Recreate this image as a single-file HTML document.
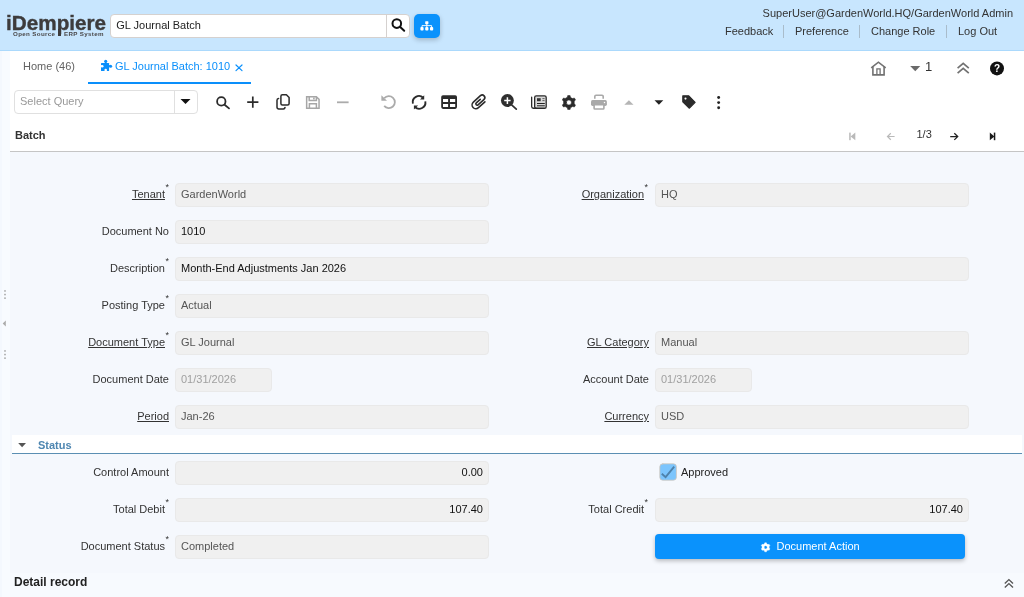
<!DOCTYPE html>
<html lang="en">
<head>
<meta charset="utf-8">
<title>iDempiere - GL Journal Batch</title>
<style>
*{box-sizing:border-box;margin:0;padding:0}
html,body{width:1024px;height:597px;overflow:hidden;background:#fff}
body{position:relative;will-change:transform;font-family:"Liberation Sans",Arial,Helvetica,sans-serif;font-size:11px;color:#333;line-height:1}
.abs{position:absolute}
svg{display:block;overflow:visible}

/* ---------- header ---------- */
#hdr{position:absolute;left:0;top:0;width:1024px;height:51px;background:#c8e6fe;border-bottom:1px solid #abd9fc}
#logo{position:absolute;left:6px;top:11.4px;font-weight:bold;font-size:19.5px;line-height:24px;color:#3d3b3c;-webkit-text-stroke:.35px #3d3b3c;white-space:nowrap;transform:scaleX(1.062);transform-origin:0 0}
.logosub{position:absolute;top:30px;font-weight:bold;font-size:6.2px;line-height:7px;color:#4a4849;letter-spacing:.35px;white-space:nowrap}
#logobar{position:absolute;left:58px;top:29px;width:3px;height:7px;background:#3d3b3c}
#gsearch{position:absolute;left:110px;top:14px;width:300px;height:24px;background:#fff;border:1px solid #d5d1cf;border-radius:4px}
#gsearch .txt{position:absolute;left:5.3px;top:0;line-height:20px;font-size:11px;color:#222}
#gsearch .sep{position:absolute;left:275px;top:0;width:1px;height:22px;background:#d5d1cf}
#treebtn{position:absolute;left:414px;top:14px;width:26px;height:24px;background:#0a92fc;border-radius:5px;box-shadow:0 2px 5px rgba(0,0,0,.22)}
#user{position:absolute;right:11px;top:6px;font-size:11px;line-height:15px;color:#333;white-space:nowrap}
.hl{position:absolute;top:24px;font-size:11px;line-height:15px;color:#333;white-space:nowrap}
.hsep{position:absolute;top:25px;width:1px;height:13px;background:#a9bccb}

/* ---------- left strip ---------- */
#lstrip{position:absolute;left:0;top:51px;width:10px;height:546px;background:#f8fbff;border-left:2px solid #f4f8fe}

/* ---------- tabs ---------- */
.tab{position:absolute;top:59px;font-size:11px;line-height:15px;white-space:nowrap}
#tabline{position:absolute;left:88px;top:82px;width:163px;height:2px;background:#0a8ffb}

/* ---------- toolbar ---------- */
#query{position:absolute;left:14px;top:90px;width:184px;height:24px;border:1px solid #e0e0e0;border-radius:4px;background:#fff}
#query .ph{position:absolute;left:5px;top:0;line-height:20px;font-size:11px;color:#999}
#query .sep{position:absolute;left:159px;top:0;width:1px;height:22px;background:#e0e0e0}
.ic{position:absolute}

/* ---------- form ---------- */
#batch{position:absolute;left:15px;top:128px;font-weight:bold;font-size:11px;line-height:15px;color:#333}
#hline{position:absolute;left:10px;top:151px;width:1014px;height:1px;background:#c5c5c5}
#form{position:absolute;left:10px;top:152px;width:1014px;height:421px;background:#f5f8fd}
.lbl{position:absolute;font-size:11px;line-height:15px;color:#333;white-space:nowrap;text-align:right}
.lbl u{text-decoration:underline;text-underline-offset:1px}
.lbl sup{position:absolute;right:-4px;top:-4px;font-size:9px;line-height:9px}
.fld{position:absolute;margin-top:1px;height:24px;border:1px solid #e9e9e9;border-radius:4px;background:#f0f0f0;font-size:11px;line-height:20px;padding:0 5px;color:#555;white-space:nowrap;overflow:hidden}
.fld.ed{color:#111}
.fld.dis{color:#a0a0a0}
.fld.num{text-align:right;color:#111}
#grp{position:absolute;left:12px;top:435px;width:1010px;height:19px;background:#fff;border-bottom:1px solid #5b8fb3}
#grp span{position:absolute;left:26px;top:3px;font-weight:bold;font-size:11px;line-height:15px;color:#4e86b1}
#docbtn{position:absolute;left:655px;top:534px;width:310px;height:25px;background:#0a92fc;border-radius:4px;box-shadow:0 2px 4px rgba(0,0,0,.25);color:#fff;font-size:11px;line-height:25px;text-align:left;padding-left:121.5px;white-space:nowrap}
#detail{position:absolute;left:10px;top:573px;width:1014px;height:24px;background:#f7fafe}
#detail b{position:absolute;left:4px;top:1.5px;font-size:12px;line-height:15px;color:#222}
</style>
</head>
<body>

<!-- header -->
<div id="hdr">
  <div id="logo">iDempiere</div>
  <div class="logosub" style="left:13px">Open Source</div><div class="logosub" style="left:64px">ERP System</div>
  <div id="logobar"></div>
  <div id="gsearch"><span class="txt">GL Journal Batch</span><span class="sep"></span></div>
  <div id="treebtn"></div>
  <div id="user">SuperUser@GardenWorld.HQ/GardenWorld Admin</div>
  <span class="hl" style="left:725px">Feedback</span>
  <span class="hsep" style="left:783px"></span>
  <span class="hl" style="left:795px">Preference</span>
  <span class="hsep" style="left:859px"></span>
  <span class="hl" style="left:871px">Change Role</span>
  <span class="hsep" style="left:946px"></span>
  <span class="hl" style="left:958px">Log Out</span>
</div>

<div id="lstrip"></div>

<!-- tabs -->
<span class="tab" style="left:23px;color:#626262">Home (46)</span>
<span class="tab" style="left:115px;color:#0a8ffb">GL Journal Batch: 1010</span>
<div id="tabline"></div>

<!-- toolbar -->
<div id="query"><span class="ph">Select Query</span><span class="sep"></span></div>

<!-- form -->
<div id="batch">Batch</div>
<div id="hline"></div>
<div id="form"></div>

<span class="lbl" style="right:859px;top:187px"><u>Tenant</u><sup>*</sup></span>
<div class="fld" style="left:175px;top:182px;width:314px">GardenWorld</div>
<span class="lbl" style="right:380px;top:187px"><u>Organization</u><sup>*</sup></span>
<div class="fld" style="left:655px;top:182px;width:314px">HQ</div>

<span class="lbl" style="right:855px;top:224px">Document No</span>
<div class="fld ed" style="left:175px;top:219px;width:314px">1010</div>

<span class="lbl" style="right:859px;top:261px">Description<sup>*</sup></span>
<div class="fld ed" style="left:175px;top:256px;width:794px">Month-End Adjustments Jan 2026</div>

<span class="lbl" style="right:859px;top:298px">Posting Type<sup>*</sup></span>
<div class="fld" style="left:175px;top:293px;width:314px">Actual</div>

<span class="lbl" style="right:859px;top:335px"><u>Document Type</u><sup>*</sup></span>
<div class="fld" style="left:175px;top:330px;width:314px">GL Journal</div>
<span class="lbl" style="right:375px;top:335px"><u>GL Category</u></span>
<div class="fld" style="left:655px;top:330px;width:314px">Manual</div>

<span class="lbl" style="right:855px;top:372px">Document Date</span>
<div class="fld dis" style="left:175px;top:367px;width:97px">01/31/2026</div>
<span class="lbl" style="right:375px;top:372px">Account Date</span>
<div class="fld dis" style="left:655px;top:367px;width:97px">01/31/2026</div>

<span class="lbl" style="right:855px;top:409px"><u>Period</u></span>
<div class="fld" style="left:175px;top:404px;width:314px">Jan-26</div>
<span class="lbl" style="right:375px;top:409px"><u>Currency</u></span>
<div class="fld" style="left:655px;top:404px;width:314px">USD</div>

<div id="grp"><span>Status</span></div>

<span class="lbl" style="right:855px;top:465px">Control Amount</span>
<div class="fld num" style="left:175px;top:460px;width:314px">0.00</div>
<span class="lbl" style="left:681px;top:465px;color:#222">Approved</span>

<span class="lbl" style="right:859px;top:502px">Total Debit<sup>*</sup></span>
<div class="fld num" style="left:175px;top:497px;width:314px">107.40</div>
<span class="lbl" style="right:380px;top:502px">Total Credit<sup>*</sup></span>
<div class="fld num" style="left:655px;top:497px;width:314px">107.40</div>

<span class="lbl" style="right:859px;top:539px">Document Status<sup>*</sup></span>
<div class="fld" style="left:175px;top:534px;width:314px">Completed</div>
<div id="docbtn">Document Action</div>

<div id="detail"><b>Detail record</b></div>

<!-- icon overlay -->
<svg id="icons" class="abs" style="left:0;top:0" width="1024" height="597" viewBox="0 0 1024 597" fill="none" stroke-linecap="round" stroke-linejoin="round">
  <!-- header search -->
  <g stroke="#111" stroke-width="2">
    <circle cx="396.8" cy="23.6" r="4.3"/>
    <path d="M400.2,27 L404.2,30.8"/>
  </g>
  <!-- sitemap -->
  <g fill="#fff" stroke="none">
    <rect x="425.2" y="21.2" width="3.2" height="3" rx=".6"/>
    <rect x="420.4" y="27" width="3.2" height="3.4" rx=".9"/>
    <rect x="425.2" y="27" width="3.2" height="3.4" rx=".9"/>
    <rect x="430" y="27" width="3.2" height="3.4" rx=".9"/>
  </g>
  <path d="M426.8,24 V27 M422,27 V25.6 H431.6 V27" stroke="#fff" stroke-width=".9" stroke-linecap="butt"/>

  <!-- puzzle piece (tab) -->
  <g stroke="none">
    <rect x="101" y="62.9" width="8.1" height="8" rx=".5" fill="#0a8ffb"/>
    <circle cx="105.7" cy="61.3" r="1.55" fill="#0a8ffb"/><rect x="104.9" y="61.3" width="1.6" height="2" fill="#0a8ffb"/>
    <circle cx="110.6" cy="66.2" r="1.55" fill="#0a8ffb"/><rect x="108.8" y="65.3" width="2" height="1.8" fill="#0a8ffb"/>
    <circle cx="102.2" cy="66.2" r="1.3" fill="#fff"/><rect x="100.5" y="65.3" width="1.7" height="1.8" fill="#fff"/>
    <circle cx="105.7" cy="69.9" r="1.25" fill="#fff"/><rect x="104.9" y="69.9" width="1.6" height="1.5" fill="#fff"/>
  </g>
  <!-- tab close -->
  <path d="M236,65 L242,70.6 M242,65 L236,70.6" stroke="#0a8ffb" stroke-width="1.2"/>

  <!-- home -->
  <g stroke="#727272" stroke-width="1.6" stroke-linecap="butt" stroke-linejoin="miter">
    <path d="M871.2,67.8 L878.4,62.2 L885.7,67.8"/>
    <path d="M872.9,66.8 V74.9 H884.1 V66.8"/>
    <path d="M876.9,74.9 V68.9 H880.1 V74.9" stroke-width="1.3"/>
  </g>
  <path d="M910.2,66.1 H920.3 L915.25,71.3Z" fill="#6a6a6a" stroke="none"/>
  <!-- double chevron up -->
  <path d="M957.6,68.2 L963.2,63.3 L968.8,68.2 M957.6,73.2 L963.2,68.3 L968.8,73.2" stroke="#727272" stroke-width="1.7" stroke-linecap="butt" stroke-linejoin="miter"/>
  <!-- help -->
  <circle cx="997" cy="68.4" r="7" fill="#111" stroke="none"/>

  <!-- query caret -->
  <path d="M180.5,99 H190.5 L185.5,104Z" fill="#111" stroke="none"/>

  <!-- toolbar: search -->
  <g stroke="#2b2b2b" stroke-width="1.8">
    <circle cx="221.3" cy="101.4" r="4.2"/>
    <path d="M224.6,104.7 L229,108.4"/>
  </g>
  <!-- plus -->
  <path d="M247.2,102.2 H258.4 M252.8,96.6 V107.8" stroke="#2b2b2b" stroke-width="1.7" stroke-linecap="butt"/>
  <!-- copy -->
  <g stroke="#2b2b2b" stroke-width="1.5">
    <path d="M282.4,94.8 H286.4 L289.1,97.6 V103.5 A1.5,1.5 0 0 1 287.6,105 H282.4 A1.5,1.5 0 0 1 280.9,103.500 V96.3 A1.5,1.5 0 0 1 282.4,94.8Z"/>
    <path d="M278.6,98.6 A1.7,1.7 0 0 0 277,100.3 V107.2 A1.7,1.7 0 0 0 278.7,108.9 H283.4 A1.7,1.7 0 0 0 285,107.5"/>
  </g>
  <!-- save (disabled) -->
  <g stroke="#a6a6a6" stroke-width="1.5" stroke-linecap="butt" stroke-linejoin="miter">
    <path d="M306.65,96.65 H316.3 L319.05,99.4 V108.3 H306.65Z"/>
    <path d="M309.2,96.65 V100.4 H316.4 V96.65"/>
    <path d="M309.4,108.3 V103.7 H316.4 V108.3"/>
    <path d="M313.9,97.4 V99.4" stroke-width="1.6"/>
  </g>
  <!-- delete (disabled) -->
  <path d="M337,102.3 H348.6" stroke="#ababab" stroke-width="1.8" stroke-linecap="butt"/>

  <!-- undo (disabled) -->
  <path d="M384.3,98.2 A6,6 0 1 1 384.2,105.9" stroke="#ababab" stroke-width="1.8" stroke-linecap="butt"/>
  <path d="M381.4,95.2 V100.8 H387Z" fill="#ababab" stroke="none"/>
  <!-- refresh -->
  <g stroke="#2b2b2b" stroke-width="1.9" stroke-linecap="butt">
    <path d="M412.9,103.6 A6.2,6.2 0 0 1 423.2,97.7"/>
    <path d="M425.3,101.4 A6.2,6.2 0 0 1 414.9,107"/>
  </g>
  <path d="M424.2,95.2 V99.4 H420Z M413.9,109.6 V105.4 H418.1Z" fill="#2b2b2b" stroke="none"/>
  <!-- table -->
  <path fill="#2b2b2b" stroke="none" fill-rule="evenodd" d="M443,95.15 H455.2 A1.8,1.8 0 0 1 457,96.95 V107.1 A1.8,1.8 0 0 1 455.2,108.9 H443 A1.8,1.8 0 0 1 441.2,107.1 V96.95 A1.8,1.8 0 0 1 443,95.15Z M443,99.1 V102 H448.1 V99.1Z M450,99.1 V102 H455.2 V99.1Z M443,104 V107 H448.1 V104Z M450,104 V107 H455.2 V104Z"/>
  <!-- paperclip -->
  <g transform="translate(479.1,102) rotate(-42)">
    <path d="M4.4,3.8 H-4.3 A3.8,3.8 0 0 1 -4.3,-3.8 H5.2 A2.6,2.6 0 0 1 5.2,1.4 H-2.7 A1.3,1.3 0 0 1 -2.7,-1.2 H2.6" stroke="#2b2b2b" stroke-width="1.6"/>
  </g>
  <!-- zoom -->
  <circle cx="507.4" cy="100.5" r="6.45" fill="#2f2f2f" stroke="none"/>
  <path d="M504.2,100.6 H510.6 M507.4,97.3 V104" stroke="#fff" stroke-width="1.5" stroke-linecap="butt"/>
  <path d="M511.6,104.8 L516.3,109.2" stroke="#2f2f2f" stroke-width="1.7"/>
  <!-- report / newspaper -->
  <g stroke="#2b2b2b" stroke-width="1.3">
    <rect x="534.65" y="95.8" width="11.55" height="12.45" rx="1.6" fill="#d9d9d9"/>
    <path d="M531.65,97.2 V106.6 A1.7,1.7 0 0 0 533.3,108.25 H536"/>
  </g>
  <rect x="537" y="98.2" width="3.7" height="3" fill="#333" stroke="none"/>
  <path d="M542.4,98.6 H544.6 M542.4,100.6 H544.6" stroke="#555" stroke-width=".9" stroke-linecap="butt"/>
  <path d="M537,103.5 H544.8 M537,105.8 H544.8" stroke="#222" stroke-width="1" stroke-linecap="butt"/>
  <!-- gear -->
  <path fill="#2b2b2b" stroke="#2b2b2b" stroke-width=".5" stroke-linejoin="miter" fill-rule="evenodd" d="M570.49,97.23 L570.08,95.50 L567.72,95.50 L567.31,97.23 L565.13,98.49 L563.43,97.97 L562.25,100.03 L563.55,101.24 L563.55,103.76 L562.25,104.97 L563.43,107.03 L565.13,106.51 L567.31,107.77 L567.72,109.50 L570.08,109.50 L570.49,107.77 L572.67,106.51 L574.37,107.03 L575.55,104.97 L574.25,103.76 L574.25,101.24 L575.55,100.03 L574.37,97.97 L572.67,98.49Z M566.40,102.50 a2.5,2.5 0 1,0 5.0,0 a2.5,2.5 0 1,0 -5.0,0Z"/>
  <!-- print (disabled) -->
  <path d="M594.8,98.8 V96.4 A1.2,1.2 0 0 1 596,95.2 H602 A1.2,1.2 0 0 1 603.200,96.4 V98.8" stroke="#a9a9a9" stroke-width="1.6" stroke-linecap="butt"/>
  <rect x="591" y="100.1" width="15.9" height="5.8" rx="1.6" fill="#a9a9a9" stroke="none"/>
  <rect x="594.1" y="104.7" width="9.8" height="4.3" rx=".8" fill="#fff" stroke="#a9a9a9" stroke-width="1.6"/>
  <circle cx="604.5" cy="102.4" r=".75" fill="#fff" stroke="none"/>
  <!-- up (disabled) / down -->
  <path d="M624.3,104.8 H633.5 L628.9,100.3Z" fill="#b5b5b5" stroke="none"/>
  <path d="M654.5,100.3 H663.3 L658.9,104.8Z" fill="#222" stroke="none"/>
  <!-- tag -->
  <path fill="#2b2b2b" stroke="#2b2b2b" stroke-width="1.2" d="M682.8,95.8 H688.8 L695.1,102.3 L689.4,108.2 L682.8,101.8Z"/>
  <circle cx="685.5" cy="98.6" r="1.05" fill="#fff" stroke="none"/>
  <!-- more -->
  <g fill="#222" stroke="none"><circle cx="718.65" cy="97.5" r="1.45"/><circle cx="718.65" cy="102.6" r="1.45"/><circle cx="718.65" cy="107.7" r="1.45"/></g>

  <!-- record nav -->
  <g fill="#b9b9b9" stroke="none"><rect x="849.2" y="132.6" width="1.5" height="7.6"/><path d="M855.3,132.6 V140.2 L850.6,136.4Z"/></g>
  <path d="M894.6,136.5 H887.6 M890.8,133.3 L887.5,136.5 L890.8,139.7" stroke="#b9b9b9" stroke-width="1.2" stroke-linecap="butt" stroke-linejoin="miter"/>
  <path d="M950.2,136.6 H957.4 M954.3,133.3 L957.7,136.6 L954.3,139.9" stroke="#222" stroke-width="1.3" stroke-linecap="butt" stroke-linejoin="miter"/>
  <g fill="#1a1a1a" stroke="none"><rect x="993.8" y="132.6" width="1.5" height="7.6"/><path d="M989.8,132.6 V140.2 L994.4,136.4Z"/></g>

  <!-- left splitter marks -->
  <g fill="#9a9a9a" stroke="none">
    <rect x="4.3" y="290.2" width="1.4" height="1.5"/><rect x="4.3" y="293.8" width="1.4" height="1.5"/><rect x="4.3" y="297.4" width="1.4" height="1.5"/>
    <rect x="4.3" y="350.2" width="1.4" height="1.5"/><rect x="4.3" y="353.8" width="1.4" height="1.5"/><rect x="4.3" y="357.4" width="1.4" height="1.5"/>
    <path d="M5.8,320.4 V326.6 L2.7,323.5Z" fill="#ababab"/>
  </g>

  <!-- group caret -->
  <path d="M18.2,443 H26 L22.1,447.3Z" fill="#555" stroke="none"/>

  <!-- checkbox -->
  <rect x="659.8" y="463.8" width="16.6" height="16.4" rx="3" fill="#7cc5fd" stroke="#d2c6bb" stroke-width=".8"/>
  <path d="M661.8,473.7 L665.6,477.2 L674.2,466.6" stroke="#4e82ab" stroke-width="1.85" stroke-linecap="butt" stroke-linejoin="miter"/>

  <!-- doc action gear -->
  <path fill="#fff" stroke="#fff" stroke-width=".4" fill-rule="evenodd" d="M766.73,543.83 L766.41,542.77 L764.79,542.77 L764.47,543.83 L763.16,544.59 L762.09,544.33 L761.27,545.74 L762.03,546.54 L762.03,548.06 L761.27,548.86 L762.09,550.27 L763.16,550.01 L764.47,550.77 L764.79,551.83 L766.41,551.83 L766.73,550.77 L768.04,550.01 L769.11,550.27 L769.93,548.86 L769.17,548.06 L769.17,546.54 L769.93,545.74 L769.11,544.33 L768.04,544.59Z M763.95,547.30 a1.65,1.65 0 1,0 3.3,0 a1.65,1.65 0 1,0 -3.3,0Z"/>

  <!-- detail chevrons -->
  <path d="M1004.8,583.4 L1008.9,579.6 L1013,583.4 M1004.8,587.4 L1008.9,583.6 L1013,587.4" stroke="#555" stroke-width="1.4" stroke-linecap="butt" stroke-linejoin="miter"/>
</svg>
<span class="abs" style="left:925px;top:59px;font-size:13px;line-height:16px;color:#333">1</span>
<span class="abs" style="left:990px;top:62px;width:14px;text-align:center;font-size:10px;font-weight:bold;line-height:13px;color:#fff">?</span>
<span class="abs" style="left:916.5px;top:127px;font-size:11px;line-height:15px;color:#333">1/3</span>

</body>
</html>
